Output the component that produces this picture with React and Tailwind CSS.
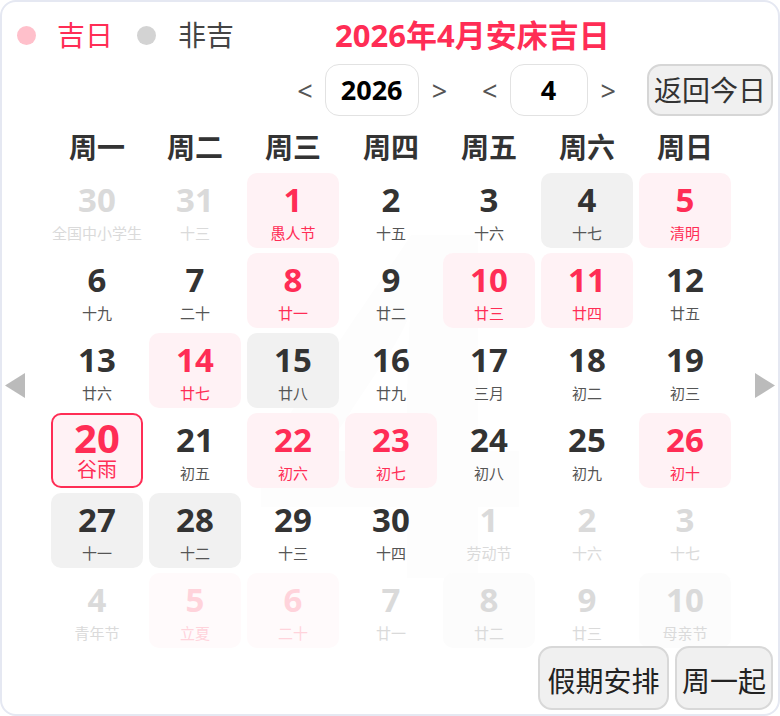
import React from "react";

// --- Data ---
// kind: "pink" | "gray" | "plain"; other: day belongs to a neighbouring month
const weeks = [
  [
    { d: 30, l: "全国中小学生", other: true },
    { d: 31, l: "十三", other: true },
    { d: 1, l: "愚人节", kind: "pink" },
    { d: 2, l: "十五" },
    { d: 3, l: "十六" },
    { d: 4, l: "十七", kind: "gray" },
    { d: 5, l: "清明", kind: "pink" },
  ],
  [
    { d: 6, l: "十九" },
    { d: 7, l: "二十" },
    { d: 8, l: "廿一", kind: "pink" },
    { d: 9, l: "廿二" },
    { d: 10, l: "廿三", kind: "pink" },
    { d: 11, l: "廿四", kind: "pink" },
    { d: 12, l: "廿五" },
  ],
  [
    { d: 13, l: "廿六" },
    { d: 14, l: "廿七", kind: "pink" },
    { d: 15, l: "廿八", kind: "gray" },
    { d: 16, l: "廿九" },
    { d: 17, l: "三月" },
    { d: 18, l: "初二" },
    { d: 19, l: "初三" },
  ],
  [
    { d: 20, l: "谷雨", today: true },
    { d: 21, l: "初五" },
    { d: 22, l: "初六", kind: "pink" },
    { d: 23, l: "初七", kind: "pink" },
    { d: 24, l: "初八" },
    { d: 25, l: "初九" },
    { d: 26, l: "初十", kind: "pink" },
  ],
  [
    { d: 27, l: "十一", kind: "gray" },
    { d: 28, l: "十二", kind: "gray" },
    { d: 29, l: "十三" },
    { d: 30, l: "十四" },
    { d: 1, l: "劳动节", other: true },
    { d: 2, l: "十六", other: true },
    { d: 3, l: "十七", other: true },
  ],
  [
    { d: 4, l: "青年节", other: true },
    { d: 5, l: "立夏", other: true, kind: "pink" },
    { d: 6, l: "二十", other: true, kind: "pink" },
    { d: 7, l: "廿一", other: true },
    { d: 8, l: "廿二", other: true, kind: "gray" },
    { d: 9, l: "廿三", other: true },
    { d: 10, l: "母亲节", other: true, kind: "gray" },
  ],
];

const weekdays = ["周一", "周二", "周三", "周四", "周五", "周六", "周日"];

const DayCell = ({ day }) => {
  if (day.today) {
    return (
      <div className="h-[75px] rounded-[10px] border-2 border-[#ff2d55] bg-[#fff2f5] flex flex-col items-center">
        <span className="mt-[1px] text-[40px] leading-[44px] font-bold text-[#ff2d55]">
          {day.d}
        </span>
        <span className="-mt-[2px] text-[20px] leading-[24px] text-[#ff2d55]">
          {day.l}
        </span>
      </div>
    );
  }

  let bg = "";
  let num = "text-[#333333]";
  let lunar = "text-[#555555]";
  if (day.other) {
    num = "text-[#dadada]";
    lunar = "text-[#dadada]";
    if (day.kind === "pink") {
      bg = "bg-[#fffafb]";
      num = "text-[#ffd3db]";
      lunar = "text-[#ffd3db]";
    } else if (day.kind === "gray") {
      bg = "bg-[#fcfcfc]";
    }
  } else if (day.kind === "pink") {
    bg = "bg-[#fff2f5]";
    num = "text-[#ff2d55]";
    lunar = "text-[#ff2d55]";
  } else if (day.kind === "gray") {
    bg = "bg-[#f1f1f1]";
  }

  return (
    <div className={`h-[75px] rounded-[10px] flex flex-col items-center ${bg}`}>
      <span className={`mt-[10px] text-[33px] leading-[34px] font-bold ${num}`}>
        {day.d}
      </span>
      <span className={`mt-[7px] text-[15px] leading-[18px] whitespace-nowrap ${lunar}`}>
        {day.l}
      </span>
    </div>
  );
};

export default function App() {
  return (
    <div
      className="relative w-[780px] h-[716px] bg-white border-2 border-[#e5e8f2] rounded-[16px] overflow-hidden"
      style={{ fontFamily: '"Noto Sans", "Noto Sans CJK SC", sans-serif' }}
    >
      {/* faint month watermark */}
      <div className="absolute left-0 right-0 top-[150px] flex justify-center pointer-events-none select-none" aria-hidden="true">
        <span className="text-[480px] leading-none font-bold text-[#fdfdfd]">4</span>
      </div>

      <div className="relative">
        {/* Legend + title */}
        <div className="h-[36px] mt-[15px] ml-[15px] flex items-center">
          <span className="w-[19px] h-[19px] rounded-full bg-[#ffc0cb]" />
          <span className="ml-[21px] text-[28px] leading-[36px] text-[#ff2d55]">吉日</span>
          <span className="ml-[24px] w-[19px] h-[19px] rounded-full bg-[#d3d3d3]" />
          <span className="ml-[22px] text-[28px] leading-[36px] text-[#444444]">非吉</span>
          <span className="ml-[101px] text-[31px] leading-[36px] font-bold text-[#ff2d55]">
            2026年4月安床吉日
          </span>
        </div>

        {/* Year / month controls */}
        <div className="h-[52px] mt-[11px] pr-[5px] flex justify-end items-center text-[#555555]">
          <span className="text-[27px] leading-none">&lt;</span>
          <div className="ml-[12px] w-[94px] h-[52px] rounded-[14px] border border-[#e2e2e2] flex items-center justify-center text-[27px] font-bold text-black">
            2026
          </div>
          <span className="ml-[13px] text-[27px] leading-none">&gt;</span>
          <span className="ml-[35px] text-[27px] leading-none">&lt;</span>
          <div className="ml-[12px] w-[78px] h-[52px] rounded-[14px] border border-[#e2e2e2] flex items-center justify-center text-[27px] font-bold text-black">
            4
          </div>
          <span className="ml-[13px] text-[27px] leading-none">&gt;</span>
          <button className="ml-[31px] w-[126px] h-[52px] rounded-[14px] border-2 border-[#d6d6d6] bg-[#f0f0f0] text-[28px] text-[#333333] flex items-center justify-center">
            返回今日
          </button>
        </div>

        {/* Weekday header */}
        <div className="mt-[12px] ml-[49px] w-[680px] h-[38px] grid grid-cols-7 gap-x-[6px] items-center">
          {weekdays.map((w) => (
            <div key={w} className="text-center text-[28px] leading-[38px] font-bold text-[#333333]">
              {w}
            </div>
          ))}
        </div>

        {/* Days */}
        <div className="relative mt-[7px] ml-[49px] w-[680px] grid grid-cols-7 gap-x-[6px] gap-y-[5px]">
          {weeks.flat().map((day, i) => (
            <DayCell key={i} day={day} />
          ))}
        </div>

        {/* Footer buttons */}
        <div className="relative -mt-[2px] pr-[5px] flex justify-end gap-[6px]">
          <button className="w-[131px] h-[64px] rounded-[14px] border-2 border-[#d8d8d8] bg-[#f0f0f0] text-[28px] text-[#222222] flex items-center justify-center pt-[6px]">
            假期安排
          </button>
          <button className="w-[98px] h-[64px] rounded-[14px] border-2 border-[#d8d8d8] bg-[#f0f0f0] text-[28px] text-[#222222] flex items-center justify-center pt-[6px]">
            周一起
          </button>
        </div>
      </div>

      {/* Month navigation arrows */}
      <svg className="absolute left-[3px] top-[371px]" width="20" height="25" viewBox="0 0 20 25">
        <polygon points="20,0 20,25 0,12.5" fill="#bbbbbb" />
      </svg>
      <svg className="absolute right-[3px] top-[371px]" width="20" height="25" viewBox="0 0 20 25">
        <polygon points="0,0 0,25 20,12.5" fill="#bbbbbb" />
      </svg>
    </div>
  );
}
